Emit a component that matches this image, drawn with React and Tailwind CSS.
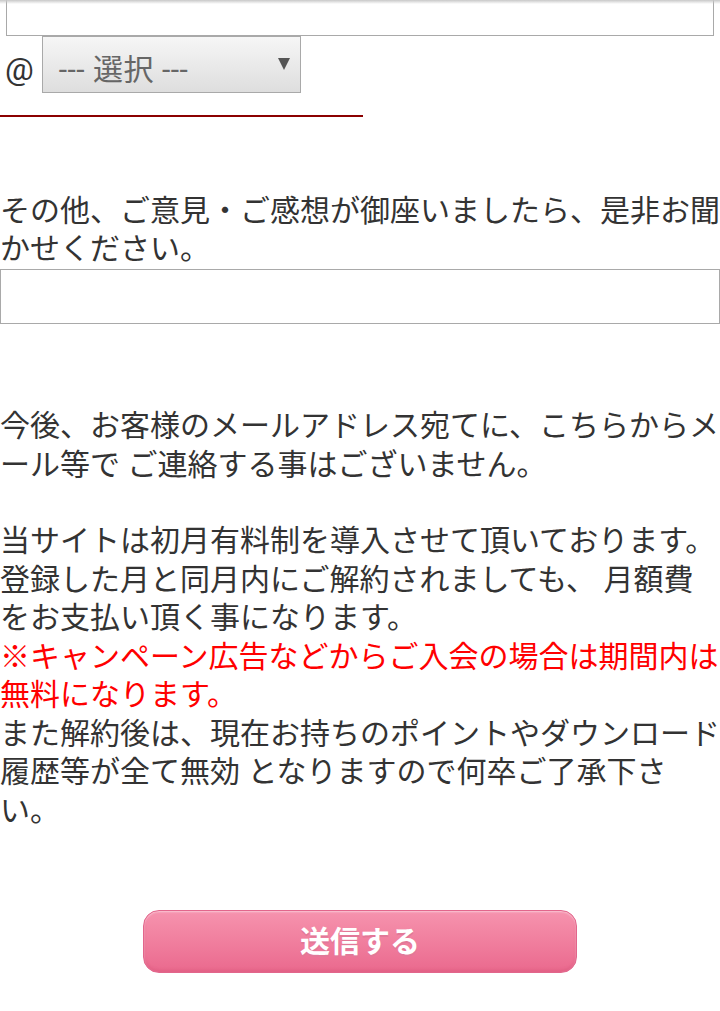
export default function App() {
  return (
    <div className="relative w-[720px] min-h-[1011px] bg-white text-[#333] font-['Roboto','Noto_Sans_CJK_JP',sans-serif] text-[30px] leading-[38px]">
      {/* scroll shadow at top */}
      <div className="absolute top-0 left-0 right-0 h-[4px] bg-gradient-to-b from-[#c8c8c8] to-transparent" />

      {/* mail address input (cut at top) */}
      <div className="ml-[6px] w-[708px] h-[36px] border-x border-b border-[#a9a9a9] bg-white" />

      <div className="flex items-end gap-[8px] pl-[5px]">
        <span className="text-[32px] leading-none mb-[8px]">@</span>
        <div className="relative w-[259px] h-[57px] border border-[#a9a9a9] bg-gradient-to-b from-[#f6f6f6] to-[#dedede] flex items-center pl-[16px] pt-[10px]">
          <span className="text-[30px] leading-none text-[#666] tracking-[0.5px]">--- 選択 ---</span>
          <span className="absolute right-[10px] top-[21px] w-0 h-0 border-x-[6px] border-x-transparent border-t-[12px] border-t-[#555]" />
        </div>
      </div>

      <div className="mt-[22px] w-[363px] h-[2px] bg-[#8b0000]" />

      <p className="mt-[75px]">その他、ご意見・ご感想が御座いましたら、是非お聞かせください。</p>
      <div className="mt-px w-[720px] h-[55px] border border-[#a9a9a9]" />

      <div className="mt-[83px] leading-[38.5px]">
        <p>今後、お客様のメールアドレス宛てに、こちらからメール等で ご連絡する事はございません。</p>
        <p className="mt-[38px]">
          当サイトは初月有料制を導入させて頂いております。登録した月と同月内にご解約されましても、 月額費をお支払い頂く事になります。
        </p>
        <p className="text-[#ff0000]">※キャンペーン広告などからご入会の場合は期間内は無料になります。</p>
        <p>また解約後は、現在お持ちのポイントやダウンロード履歴等が全て無効 となりますので何卒ご了承下さい。</p>
      </div>

      <div className="mt-[80px] flex justify-center">
        <button className="w-[434px] h-[63px] rounded-[16px] border border-[#e2668c] bg-gradient-to-b from-[#f693ae] to-[#ea698e] shadow-[inset_0_1px_2px_rgba(255,255,255,0.5),inset_0_-2px_3px_rgba(200,60,100,0.25)] text-white font-bold text-[30px] leading-none [text-shadow:0_2px_0_#e27898]">
          送信する
        </button>
      </div>
    </div>
  )
}
